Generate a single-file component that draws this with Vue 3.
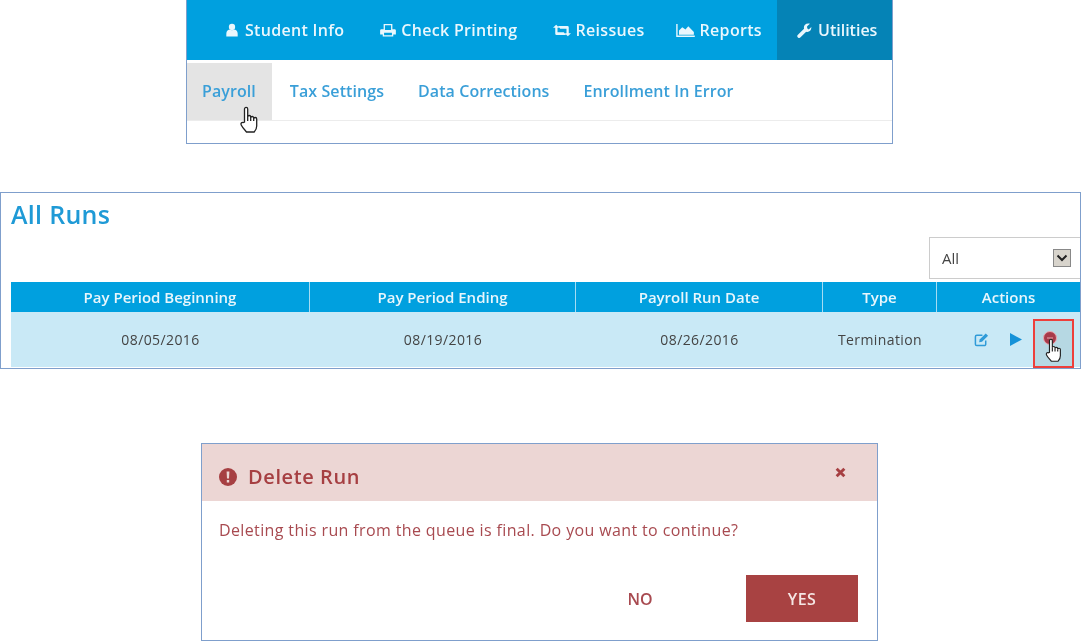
<script setup>
const hand = 'M5 16V3a1.6 1.6 0 0 1 3.2 0v8a1.5 1.5 0 0 1 3 0v1a1.5 1.5 0 0 1 3 0v1a1.5 1.5 0 0 1 3 0v7c0 2.5-1 4.5-2.5 6H7c-1.5-2-3.8-4-5.3-7-.8-1.6.4-3 2-2.4z'
const handLines = 'M8.2 11v4M11.2 12v3M14.2 13v2'
const subLinks = ['Tax Settings', 'Data Corrections', 'Enrollment In Error']
const columns = [
  { title: 'Pay Period Beginning', value: '08/05/2016' },
  { title: 'Pay Period Ending', value: '08/19/2016' },
  { title: 'Payroll Run Date', value: '08/26/2016' },
  { title: 'Type', value: 'Termination' }
]
</script>

<template>
  <div class="page">
    <section class="menu-panel">
      <nav class="main-nav">
        <a class="nav-item student">
          <svg class="nav-icon" viewBox="0 0 16 16" width="14" height="14"><circle cx="8" cy="4.5" r="3.6" /><path d="M1.5 15.5v-3.2c0-3 1.8-4.4 3.5-4.8 1 1 5 1 6 0 1.7.4 3.5 1.8 3.5 4.8v3.2z" /></svg>
          Student Info
        </a>
        <a class="nav-item">
          <svg class="nav-icon" viewBox="0 0 18 16" width="16" height="14"><path fill-rule="evenodd" d="M4 1h10v6h2.500c1 0 1.500.7 1.500 1.500V13h-3v2.500H3V13H0V8.500C0 7.700.5 7 1.500 7H4zm1.500 1.500V8h7V2.500zM4.500 11v3h9v-3z" /></svg>
          Check Printing
        </a>
        <a class="nav-item reissues">
          <svg class="nav-icon" viewBox="0 0 20 14" width="18" height="13"><path d="M0 4l3.500-3.500L7 4H5v5h7l2.500 3H4a1.500 1.500 0 0 1-1.500-1.500V4zM20 10l-3.500 3.500L13 10h2V5H8L5.500 2H16a1.500 1.500 0 0 1 1.500 1.500V10z" /></svg>
          Reissues
        </a>
        <a class="nav-item reports">
          <svg class="nav-icon" viewBox="0 0 20 14" width="19" height="13"><path d="M0 0h1.500v12.500H20V14H0z" /><path d="M3 11.500V7l3.500-3.500L10 6l3-3.500L19 8.500v3z" /></svg>
          Reports
        </a>
        <a class="nav-item active">
          <svg class="nav-icon" viewBox="0 0 16 16" width="15" height="15"><path d="M1 12.500L7.500 6c-.7-2.500 1-5.500 4.500-5.500.7 0 1.300.1 1.800.4L10.800 3.500v2l1.700 1.500 2.800-2.700c.3 3.500-2.500 5.900-5.500 5L3.500 15.500a1.700 1.700 0 0 1-2.500-3z" /></svg>
          Utilities
        </a>
      </nav>
      <div class="sub-nav">
        <a class="sub-item current">
          Payroll
          <svg class="hand hand-payroll" viewBox="0 0 19 28" width="20" height="28"><path :d="hand" /><path :d="handLines" /></svg>
        </a>
        <a v-for="link in subLinks" :key="link" class="sub-item">{{ link }}</a>
      </div>
    </section>

    <section class="runs-panel">
      <h2 class="runs-title">All Runs</h2>
      <div class="filter-row">
        <div class="fake-select">
          <span>All</span>
          <span class="select-arrow">
            <svg viewBox="0 0 12 8" width="12" height="8"><path d="M1.500 1.500L6 6l4.500-4.500" /></svg>
          </span>
        </div>
      </div>
      <div class="table">
        <div v-for="col in columns" :key="col.title" class="th">{{ col.title }}</div>
        <div class="th">Actions</div>
        <div v-for="col in columns" :key="col.value" class="td">{{ col.value }}</div>
        <div class="td actions">
          <svg class="edit-icon" viewBox="0 0 16 16" width="15" height="15"><path d="M12.500 9v4a1.500 1.500 0 0 1-1.500 1.500H3A1.500 1.500 0 0 1 1.500 13V5A1.500 1.500 0 0 1 3 3.500h6" /><path class="edit-pen" d="M6 8l6.500-6.500 2.500 2.500L8.500 10.500 5.500 11z" /></svg>
          <svg class="play-icon" viewBox="0 0 12 13" width="12" height="13"><path d="M0 0l12 6.500L0 13z" /></svg>
          <span class="delete-cell">
            <svg class="delete-dot" viewBox="0 0 14 14" width="14" height="14"><circle cx="7" cy="7" r="6.500" /><path d="M4 7h6" /></svg>
            <svg class="hand hand-delete" viewBox="0 0 19 28" width="19" height="25"><path :d="hand" /><path :d="handLines" /></svg>
          </span>
        </div>
      </div>
    </section>

    <section class="dialog">
      <header class="dialog-head">
        <svg class="alert-icon" viewBox="0 0 18 18" width="18" height="18"><circle cx="9" cy="9" r="9" /><path class="mark" d="M7.600 3.500h2.800l-.4 7H8zM7.800 12h2.400v2.500H7.800z" /></svg>
        <h3 class="dialog-title">Delete Run</h3>
        <svg class="close-icon" viewBox="0 0 10 10" width="11" height="11"><path d="M1.500 1.500l7 7M8.500 1.500l-7 7" /></svg>
      </header>
      <p class="dialog-text">Deleting this run from the queue is final. Do you want to continue?</p>
      <div class="dialog-actions">
        <button class="btn no">NO</button>
        <button class="btn yes">YES</button>
      </div>
    </section>
  </div>
</template>

<style scoped>
.page {
  width: 1081px;
  height: 641px;
  overflow: hidden;
  background: #fff;
  font-family: "Open Sans", "Liberation Sans", sans-serif;
  display: flex;
  flex-direction: column;
  filter: blur(0.4px);
}
.menu-panel {
  box-sizing: border-box;
  width: 707px;
  height: 144px;
  margin-left: 186px;
  border: 1px solid #7f9fcc;
  border-top: 0;
}
.main-nav {
  height: 60px;
  background: #00a0df;
  display: flex;
  padding-left: 20px;
}
.nav-item {
  display: flex;
  align-items: center;
  gap: 5px;
  padding: 0 17px 0 18px;
  color: #eaf7fd;
  font-size: 16px;
  font-weight: 600;
  letter-spacing: 0.3px;
  white-space: nowrap;
}
.student { padding-right: 18px; gap: 6px; }
.reissues { padding-right: 13px; }
.reports { padding-right: 10px; }
.nav-icon { fill: #eaf7fd; }
.active {
  box-sizing: border-box;
  flex: none;
  width: 115px;
  padding: 0 0 0 20px;
  gap: 6px;
  letter-spacing: 0;
  background: #0583b6;
  margin-left: auto;
}
.sub-nav {
  margin-top: 3px;
  height: 57px;
  display: flex;
  border-bottom: 1px solid #ececec;
}
.sub-item {
  display: flex;
  align-items: center;
  padding: 0 17px 2px;
  color: #3a9fd8;
  font-size: 16px;
  font-weight: 600;
  letter-spacing: 0.08px;
  white-space: nowrap;
}
.sub-item.current {
  position: relative;
  background: #e4e4e4;
  margin-right: 1px;
  padding: 0 16px 2px 15px;
}
.hand { position: absolute; fill: #fff; stroke: #222; stroke-width: 1.300; }
.hand-payroll { left: 52px; top: 43px; }
.runs-panel {
  box-sizing: border-box;
  width: 1081px;
  height: 177px;
  margin-top: 48px;
  border: 1px solid #7f9fcc;
  padding: 0 0 0 10px;
}
.runs-title {
  margin: 5px 0 0;
  color: #1f9ad6;
  font-size: 25px;
  font-weight: 600;
  line-height: 33px;
  letter-spacing: 0.3px;
}
.filter-row { display: flex; justify-content: flex-end; height: 45px; margin-top: 6px; }
.fake-select {
  box-sizing: border-box;
  width: 151px;
  height: 42px;
  border: 1px solid #ccc;
  border-right: 0;
  display: flex;
  align-items: center;
  justify-content: space-between;
  padding: 0 9px 0 12px;
  color: #444;
  font-size: 15px;
}
.select-arrow {
  box-sizing: border-box;
  width: 18px;
  height: 18px;
  background: #d8d4cc;
  border: 1px solid #888;
  display: flex;
  align-items: center;
  justify-content: center;
}
.select-arrow svg { fill: none; stroke: #222; stroke-width: 2; }
.table {
  display: grid;
  grid-template-columns: 299px 266px 247px 114px 1fr;
  grid-template-rows: 30px 55px;
}
.th {
  background: #00a0df;
  color: #e8f6fc;
  font-size: 15px;
  font-weight: 600;
  display: flex;
  align-items: center;
  justify-content: center;
  border-right: 1px solid #a5dcf3;
}
.th:nth-child(5) { border-right: 0; }
.td {
  background: #c9e9f6;
  color: #444;
  font-size: 14px;
  font-weight: 500;
  letter-spacing: 0.4px;
  display: flex;
  align-items: center;
  justify-content: center;
}
.actions { position: relative; justify-content: flex-start; padding-left: 37px; gap: 21px; }
.edit-icon { fill: none; stroke: #2f9bd8; stroke-width: 1.600; }
.edit-pen { fill: #2f9bd8; stroke: none; }
.play-icon { fill: #1592d8; }
.delete-cell {
  box-sizing: border-box;
  position: absolute;
  left: 96px;
  top: 7px;
  width: 41px;
  height: 49px;
  border: 2px solid #ee3f3b;
  background: #b6d8e3;
}
.delete-dot { position: absolute; left: 8px; top: 10px; fill: #a83a4a; stroke: #e8a8b0; stroke-width: 1; }
.hand-delete { left: 9px; top: 17px; }
.dialog {
  box-sizing: border-box;
  width: 677px;
  height: 198px;
  margin: 74px 0 0 201px;
  border: 1px solid #7f9fcc;
  display: flex;
  flex-direction: column;
}
.dialog-head {
  height: 57px;
  background: #ecd6d4;
  display: flex;
  align-items: center;
  padding: 8px 31px 0 17px;
  box-sizing: border-box;
  color: #a63f42;
}
.alert-icon { fill: #a63f42; }
.alert-icon .mark { fill: #ecd6d4; }
.dialog-title {
  margin: 0 0 0 11px;
  font-size: 20px;
  font-weight: 600;
  letter-spacing: 0.6px;
  flex: 1;
}
.close-icon { fill: none; stroke: #a63f42; stroke-width: 2.600; margin-top: -8px; }
.dialog-text {
  margin: 19px 0 0 17px;
  color: #a84a50;
  font-size: 16px;
  line-height: 20px;
  font-weight: 400;
  letter-spacing: 0.37px;
}
.dialog-actions {
  margin-top: 35px;
  padding-right: 19px;
  display: flex;
  justify-content: flex-end;
}
.btn {
  box-sizing: border-box;
  width: 112px;
  height: 47px;
  border: 0;
  font-family: inherit;
  font-size: 16px;
  font-weight: 600;
  background: transparent;
}
.no { color: #a84a50; margin-right: 50px; }
.yes { background: #a84242; color: #f5e6e4; letter-spacing: 0.4px; }
</style>
